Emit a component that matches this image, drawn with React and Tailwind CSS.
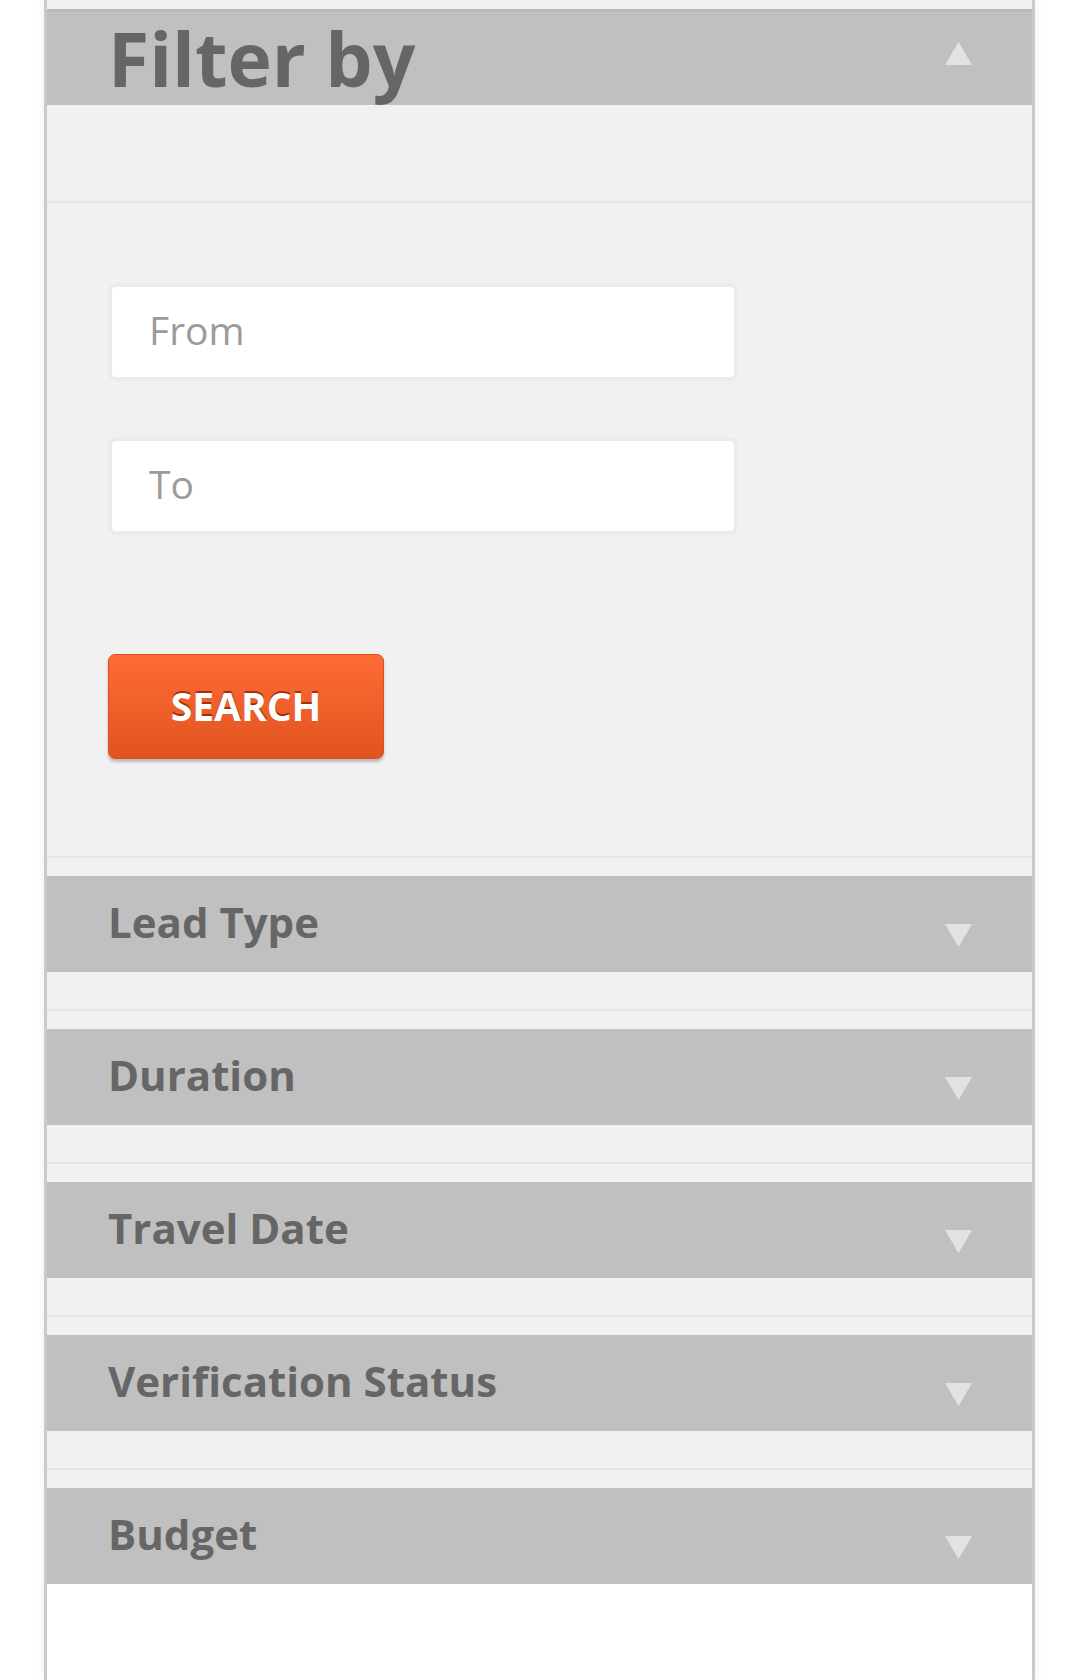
const sections = ["Lead Type", "Duration", "Travel Date", "Verification Status", "Budget"];

const Triangle = ({ up = false, className = "" }) => (
	<svg width="27" height="23" viewBox="0 0 27 23" className={className}>
		<polygon
			points={up ? "13.5,0 27,23 0,23" : "0,0 27,0 13.5,23"}
			fill="#e2e2e2"
		/>
	</svg>
);

const DateInput = ({ placeholder }) => (
	<input
		type="text"
		placeholder={placeholder}
		className="w-[630px] h-[98px] rounded-[8px] border-[4px] border-[#ebebeb] bg-white pl-[37px] pb-[6px] text-[39px] font-normal text-[#555] placeholder:text-[#9b9b9b] outline-none"
	/>
);

function AccordionItem({ title, last }) {
	return (
		<div className={last ? "pt-[18px] bg-[#f1f1f1]" : "pt-[18px] bg-[#f1f1f1] border-b-2 border-[#e5e5e5]"}>
			<div className="flex h-[96px] bg-[#c0c0c0] pl-[61px] pr-[60px]">
				<h3 className="text-[42px] leading-[92px] font-bold text-[#666666]">{title}</h3>
				<Triangle className="ml-auto mt-[48px]" />
			</div>
			{!last && <div className="h-[37px]"></div>}
		</div>
	);
}

export default function App() {
	return (
		<div className="min-h-[1680px] bg-white font-['Open_Sans',sans-serif]">
			<div className="ml-[44px] w-[991px] min-h-[1680px] border-x-[3px] border-[#cacaca] bg-white shadow-[0_0_8px_rgba(0,0,0,0.08)]">
				{/* Filter by */}
				<div className="bg-[#f1f1f1] pt-[9px] border-b-2 border-[#e5e5e5]">
					<div className="flex h-[96px] overflow-hidden bg-[#c0c0c0] border-t-[3px] border-[#bababa] pl-[61px] pr-[60px]">
						<h2 className="text-[75px] leading-[98px] font-bold text-[#666666] -mt-[3px]">Filter by</h2>
						<Triangle up className="ml-auto mt-[30px]" />
					</div>
					<div className="h-[96px]"></div>
				</div>

				<div className="bg-[#f1f1f1] border-b-2 border-[#e5e5e5] pl-[61px] pt-[80px] pb-[97px]">
					<div className="flex flex-col gap-[56px]">
						<DateInput placeholder="From" />
						<DateInput placeholder="To" />
					</div>
					<button className="mt-[119px] w-[276px] h-[105px] rounded-[7px] border border-[#d9521d] bg-gradient-to-b from-[#ff6b35] to-[#e0541f] shadow-[0_3px_3px_rgba(0,0,0,0.22)] text-white text-[39px] font-bold [text-shadow:0_-2px_0_rgba(120,30,0,0.7)]">
						SEARCH
					</button>
				</div>

				{sections.map((s, i) => (
					<AccordionItem key={s} title={s} last={i === sections.length - 1} />
				))}
			</div>
		</div>
	);
}
